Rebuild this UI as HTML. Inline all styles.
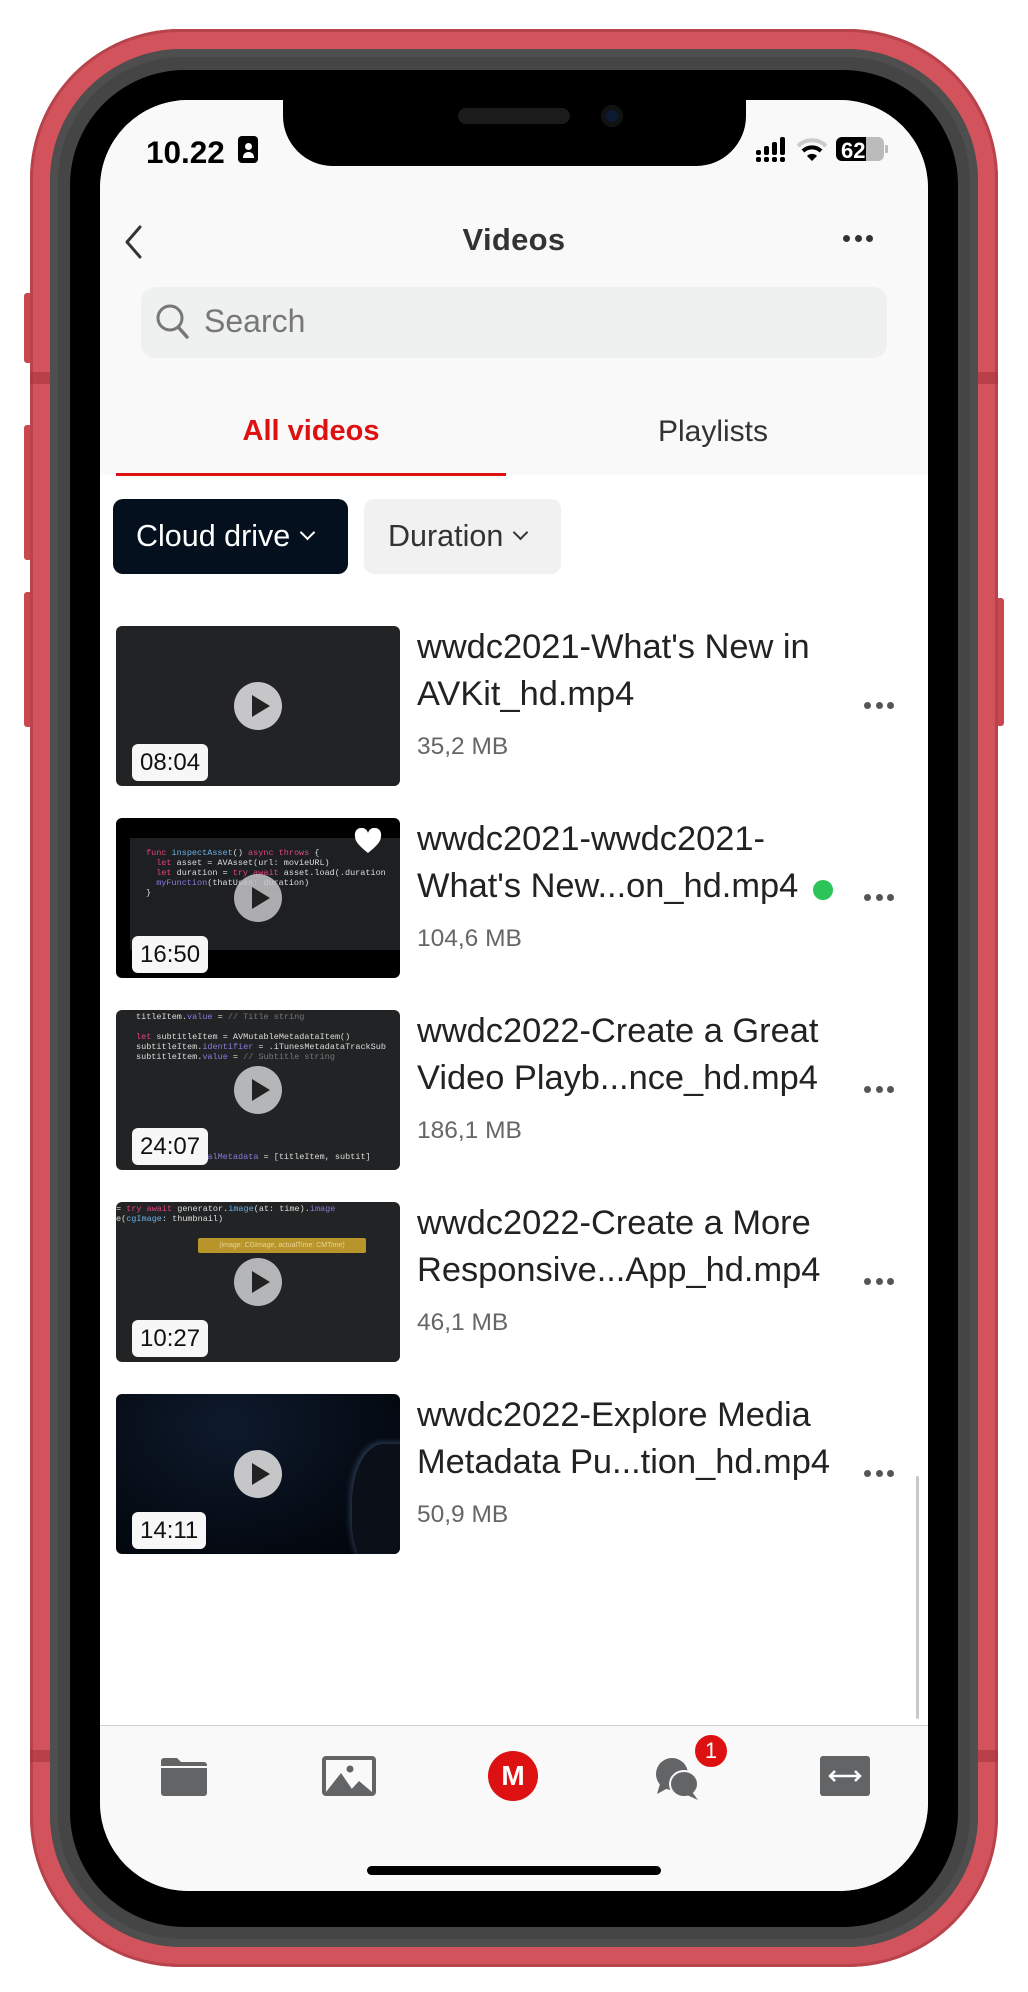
<!DOCTYPE html>
<html><head><meta charset="utf-8">
<style>
*{margin:0;padding:0;box-sizing:border-box}
body{width:1028px;height:1992px;background:#fff;position:relative;overflow:hidden;font-family:"Liberation Sans",sans-serif}
.abs{position:absolute}
.red{left:30px;top:29px;width:968px;height:1938px;border-radius:150px;background:#d2535b;box-shadow:inset 0 0 0 3px #b8434b}
.grey{left:50px;top:49px;width:928px;height:1898px;border-radius:132px;background:#454545;box-shadow:inset 0 0 0 8px #4e4e4e}
.blk{left:70px;top:70px;width:888px;height:1857px;border-radius:115px;background:#000}
.scr{left:100px;top:100px;width:828px;height:1791px;border-radius:88px;background:#fff;overflow:hidden}
.btn{background:#c9474f;border-radius:3px}
.thumb{position:absolute;left:16px;width:284px;height:160px;border-radius:6px;background:#222324;overflow:hidden}
.play{position:absolute;left:118px;top:56px;width:48px;height:48px;border-radius:50%;background:#c6c6c8}
.play:after{content:"";position:absolute;left:18px;top:13px;border-left:18px solid #222;border-top:11px solid transparent;border-bottom:11px solid transparent}
.dur{position:absolute;left:16px;bottom:5px;height:37px;padding:0 8px;background:#f7f7f7;border-radius:6px;font-size:24px;line-height:37px;color:#111}
.t{position:absolute;left:317px;font-size:34.4px;line-height:47px;color:#222;white-space:nowrap}
.sz{position:absolute;left:317px;font-size:24.5px;color:#666}
.dots{position:absolute;left:764px;width:40px;height:7px}
.dots i{display:inline-block;width:7px;height:7px;border-radius:50%;background:#555;margin-right:4.5px;vertical-align:top}
.code{position:absolute;font-family:"Liberation Mono",monospace;font-size:8.5px;line-height:10px;color:#ddd;white-space:pre}
</style></head><body>
<div class="abs btn" style="left:24px;top:293px;width:8px;height:70px"></div>
<div class="abs btn" style="left:24px;top:425px;width:8px;height:135px"></div>
<div class="abs btn" style="left:24px;top:592px;width:8px;height:135px"></div>
<div class="abs btn" style="left:996px;top:598px;width:8px;height:128px"></div>
<div class="abs red"></div>
<div class="abs" style="left:30px;top:372px;width:968px;height:12px;background:#a8343c;opacity:.6"></div>
<div class="abs" style="left:30px;top:1750px;width:968px;height:12px;background:#a8343c;opacity:.6"></div>
<div class="abs grey"></div>
<div class="abs blk"></div>
<div class="abs scr">
  <div class="abs" style="left:0;top:0;width:828px;height:375px;background:#f9f9f9"></div>
  <div class="abs" style="left:183px;top:-10px;width:463px;height:76px;background:#000;border-radius:0 0 50px 50px"></div>
  <div class="abs" style="left:358px;top:8px;width:112px;height:16px;background:#1b1b1b;border-radius:8px"></div>
  <div class="abs" style="left:501px;top:5px;width:22px;height:22px;background:#0c1a33;border-radius:50%;box-shadow:inset 0 0 0 5px #111"></div>
  <div class="abs" style="left:46px;top:34px;font-size:31.5px;font-weight:bold;color:#000">10.22</div>
  <div class="abs" style="left:138px;top:36px;width:20px;height:27px;background:#000;border-radius:4px"><div style="margin:7px auto 0;width:7px;height:7px;border-radius:50%;background:#fff"></div><div style="margin:2px auto 0;width:11px;height:6px;border-radius:5px 5px 0 0;background:#fff"></div></div>
  <svg class="abs" style="left:654px;top:34px" width="150" height="30" viewBox="0 0 150 30">
    <g fill="#000"><rect x="2" y="16" width="5" height="5" rx="2"/><rect x="2" y="23" width="5" height="5" rx="2"/><rect x="10" y="12" width="5" height="9" rx="2"/><rect x="10" y="23" width="5" height="5" rx="2"/><rect x="18" y="8" width="5" height="13" rx="2"/><rect x="18" y="23" width="5" height="5" rx="2"/><rect x="26" y="3" width="5" height="18" rx="2"/><rect x="26" y="23" width="5" height="5" rx="2"/></g>
    <path d="M44 12 A20 20 0 0 1 72 12" stroke="#ccc" stroke-width="4" fill="none"/>
    <path d="M49 17 A13 13 0 0 1 67 17" stroke="#000" stroke-width="4" fill="none"/>
    <path d="M53 22 L58 27 L63 22 A7 7 0 0 0 53 22Z" fill="#000"/>
    <rect x="82" y="3" width="48" height="24" rx="6" fill="#bbb"/>
    <path d="M88 3 H112 V27 H88 A6 6 0 0 1 82 21 V9 A6 6 0 0 1 88 3Z" fill="#000"/>
    <rect x="131" y="11" width="3" height="8" rx="1" fill="#bbb"/>
    <text x="87" y="24" font-family="Liberation Sans" font-weight="bold" font-size="22" fill="#fff">62</text>
  </svg>
  <svg class="abs" style="left:24px;top:125px" width="20" height="34" viewBox="0 0 20 34"><path d="M16 2 L3 17 L16 32" stroke="#333" stroke-width="3" fill="none" stroke-linecap="round" stroke-linejoin="round"/></svg>
  <div class="abs" style="left:0;top:122px;width:828px;text-align:center;font-size:31px;font-weight:bold;color:#333;letter-spacing:0.3px">Videos</div>
  <div class="abs dots" style="left:743px;top:135px"><i style="background:#333"></i><i style="background:#333"></i><i style="background:#333"></i></div>
  <div class="abs" style="left:41px;top:187px;width:746px;height:71px;background:#eff1f0;border-radius:14px"></div>
  <svg class="abs" style="left:55px;top:203px" width="36" height="38" viewBox="0 0 36 38"><circle cx="15" cy="15" r="12" stroke="#777" stroke-width="3" fill="none"/><path d="M24 25 L32 34" stroke="#777" stroke-width="3.5" stroke-linecap="round"/></svg>
  <div class="abs" style="left:104px;top:203px;font-size:32px;color:#777">Search</div>
  <div class="abs" style="left:16px;top:315px;width:390px;text-align:center;font-size:29px;font-weight:bold;color:#dd1111">All videos</div>
  <div class="abs" style="left:410px;top:315px;width:406px;text-align:center;font-size:30px;color:#333">Playlists</div>
  <div class="abs" style="left:16px;top:373px;width:390px;height:3px;background:#dd1111"></div>
  <div class="abs" style="left:13px;top:399px;width:235px;height:75px;background:#04101e;border-radius:10px;color:#fff;font-size:30.5px;line-height:75px;padding-left:23px;white-space:nowrap">Cloud drive <span style="display:inline-block;width:11px;height:11px;border-right:2px solid #fff;border-bottom:2px solid #fff;transform:rotate(45deg);margin:0 0 8px 3px"></span></div>
  <div class="abs" style="left:264px;top:399px;width:197px;height:75px;background:#f0f1f0;border-radius:10px;color:#333;font-size:30.5px;line-height:75px;padding-left:24px;white-space:nowrap">Duration <span style="display:inline-block;width:11px;height:11px;border-right:2px solid #333;border-bottom:2px solid #333;transform:rotate(45deg);margin:0 0 8px 3px"></span></div>

  <div class="thumb" style="top:526px"><div class="play"></div><div class="dur">08:04</div></div>
  <div class="t" style="top:524px">wwdc2021-What's New in</div>
  <div class="t" style="top:571px">AVKit_hd.mp4</div>
  <div class="sz" style="top:633px">35,2 MB</div>
  <div class="dots" style="top:602px"><i></i><i></i><i></i></div>
  <div class="thumb" style="top:718px;background:#000">
    <div class="abs" style="left:14px;top:20px;width:270px;height:112px;background:#1e1f21"></div>
    <div class="code" style="left:30px;top:30px"><span style="color:#e0457b">func</span> <span style="color:#6ab0e8">inspectAsset</span>() <span style="color:#e0457b">async throws</span> {
  <span style="color:#e0457b">let</span> asset = AVAsset(url: movieURL)
  <span style="color:#e0457b">let</span> duration = <span style="color:#e0457b">try await</span> asset.load(.duration
  <span style="color:#8a7be0">myFunction</span>(thatUses: duration)
}</div>
    <svg class="abs" style="left:238px;top:10px" width="28" height="26" viewBox="0 0 28 26"><path d="M14 25 C4 17 1 13 1 8 A6.5 6.5 0 0 1 14 5 A6.5 6.5 0 0 1 27 8 C27 13 24 17 14 25Z" fill="#fff"/></svg>
    <div class="play" style="opacity:.85"></div><div class="dur">16:50</div></div>
  <div class="t" style="top:716px">wwdc2021-wwdc2021-</div>
  <div class="t" style="top:763px">What's New...on_hd.mp4</div>
  <div class="abs" style="left:713px;top:780px;width:20px;height:20px;border-radius:50%;background:#2cc55a"></div>
  <div class="sz" style="top:825px">104,6 MB</div>
  <div class="dots" style="top:794px"><i></i><i></i><i></i></div>
  <div class="thumb" style="top:910px">
    <div class="code" style="left:20px;top:2px">titleItem.<span style="color:#8a7be0">value</span> = <span style="color:#777">// Title string</span>

<span style="color:#e0457b">let</span> subtitleItem = AVMutableMetadataItem()
subtitleItem.<span style="color:#8a7be0">identifier</span> = .iTunesMetadataTrackSub
subtitleItem.<span style="color:#8a7be0">value</span> = <span style="color:#777">// Subtitle string</span>









           <span style="color:#8a7be0">ernalMetadata</span> = [titleItem, subtit]</div>
    <div class="play" style="opacity:.9"></div><div class="dur">24:07</div></div>
  <div class="t" style="top:908px">wwdc2022-Create a Great</div>
  <div class="t" style="top:955px">Video Playb...nce_hd.mp4</div>
  <div class="sz" style="top:1017px">186,1 MB</div>
  <div class="dots" style="top:986px"><i></i><i></i><i></i></div>
  <div class="thumb" style="top:1102px">
    <div class="code" style="left:0;top:2px">= <span style="color:#e0457b">try await</span> generator.<span style="color:#6ab0e8">image</span>(at: time).<span style="color:#8a7be0">image</span>
e(<span style="color:#6ab0e8">cgImage</span>: thumbnail)</div>
    <div class="abs" style="left:82px;top:36px;width:168px;height:15px;background:#b8952a;border-radius:2px;font-size:7px;color:#e8d49a;line-height:15px;text-align:center">(image: CGImage, actualTime: CMTime)</div>
    <div class="play" style="opacity:.9"></div><div class="dur">10:27</div></div>
  <div class="t" style="top:1100px">wwdc2022-Create a More</div>
  <div class="t" style="top:1147px">Responsive...App_hd.mp4</div>
  <div class="sz" style="top:1209px">46,1 MB</div>
  <div class="dots" style="top:1178px"><i></i><i></i><i></i></div>
  <div class="thumb" style="top:1294px;background:radial-gradient(ellipse at 40% 20%,#0e1a2c,#03070e 80%)">
    <div class="abs" style="left:236px;top:50px;width:70px;height:130px;border-radius:45% 0 0 40%;background:#0a0f18;box-shadow:-2px -2px 6px #2a3950"></div>
    <div class="play"></div><div class="dur">14:11</div></div>
  <div class="t" style="top:1292px">wwdc2022-Explore Media</div>
  <div class="t" style="top:1339px">Metadata Pu...tion_hd.mp4</div>
  <div class="sz" style="top:1401px">50,9 MB</div>
  <div class="dots" style="top:1370px"><i></i><i></i><i></i></div>

  <div class="abs" style="left:816px;top:1376px;width:3px;height:243px;background:#c8c8c8;border-radius:2px"></div>
  <div class="abs" style="left:0;top:1625px;width:828px;height:200px;background:#f9f9f9;border-top:1px solid #cfcfcf"></div>
  <svg class="abs" style="left:60px;top:1657px" width="48" height="40" viewBox="0 0 48 40"><path d="M1 4 A3 3 0 0 1 4 1 H17 L21 5 H44 A3 3 0 0 1 47 8 V36 A3 3 0 0 1 44 39 H4 A3 3 0 0 1 1 36Z" fill="#636466"/><path d="M1 10 H47" stroke="#f9f9f9" stroke-width="2"/></svg>
  <svg class="abs" style="left:221px;top:1655px" width="56" height="42" viewBox="0 0 56 42"><rect x="1" y="1" width="54" height="40" rx="4" fill="#636466"/><rect x="5" y="5" width="46" height="32" fill="#f9f9f9"/><circle cx="29" cy="14" r="3.5" fill="#636466"/><path d="M5 37 L20 18 L33 37Z M28 37 L38 26 L51 37Z" fill="#636466"/></svg>
  <div class="abs" style="left:388px;top:1651px;width:50px;height:50px;border-radius:50%;background:#dd1111;color:#fff;font-weight:bold;font-size:28px;line-height:50px;text-align:center">M</div>
  <svg class="abs" style="left:554px;top:1654px" width="50" height="48" viewBox="0 0 50 48"><ellipse cx="18" cy="20" rx="16" ry="16" fill="#636466"/><path d="M6 30 L3 40 L14 34Z" fill="#636466"/><ellipse cx="30" cy="30" rx="14" ry="13" fill="#636466" stroke="#f9f9f9" stroke-width="2"/><path d="M38 38 L44 46 L33 41Z" fill="#636466"/></svg>
  <div class="abs" style="left:593px;top:1633px;width:36px;height:36px;border-radius:50%;background:#dd1111;border:2px solid #f9f9f9;color:#fff;font-size:22px;line-height:32px;text-align:center">1</div>
  <svg class="abs" style="left:720px;top:1656px" width="50" height="40" viewBox="0 0 50 40"><rect x="0" y="0" width="50" height="40" rx="3" fill="#636466"/><path d="M10 20 H40 M15 15 L10 20 L15 25 M35 15 L40 20 L35 25" stroke="#fff" stroke-width="2.5" fill="none"/></svg>
  <div class="abs" style="left:267px;top:1766px;width:294px;height:9px;background:#000;border-radius:5px"></div>
</div>
</body></html>
